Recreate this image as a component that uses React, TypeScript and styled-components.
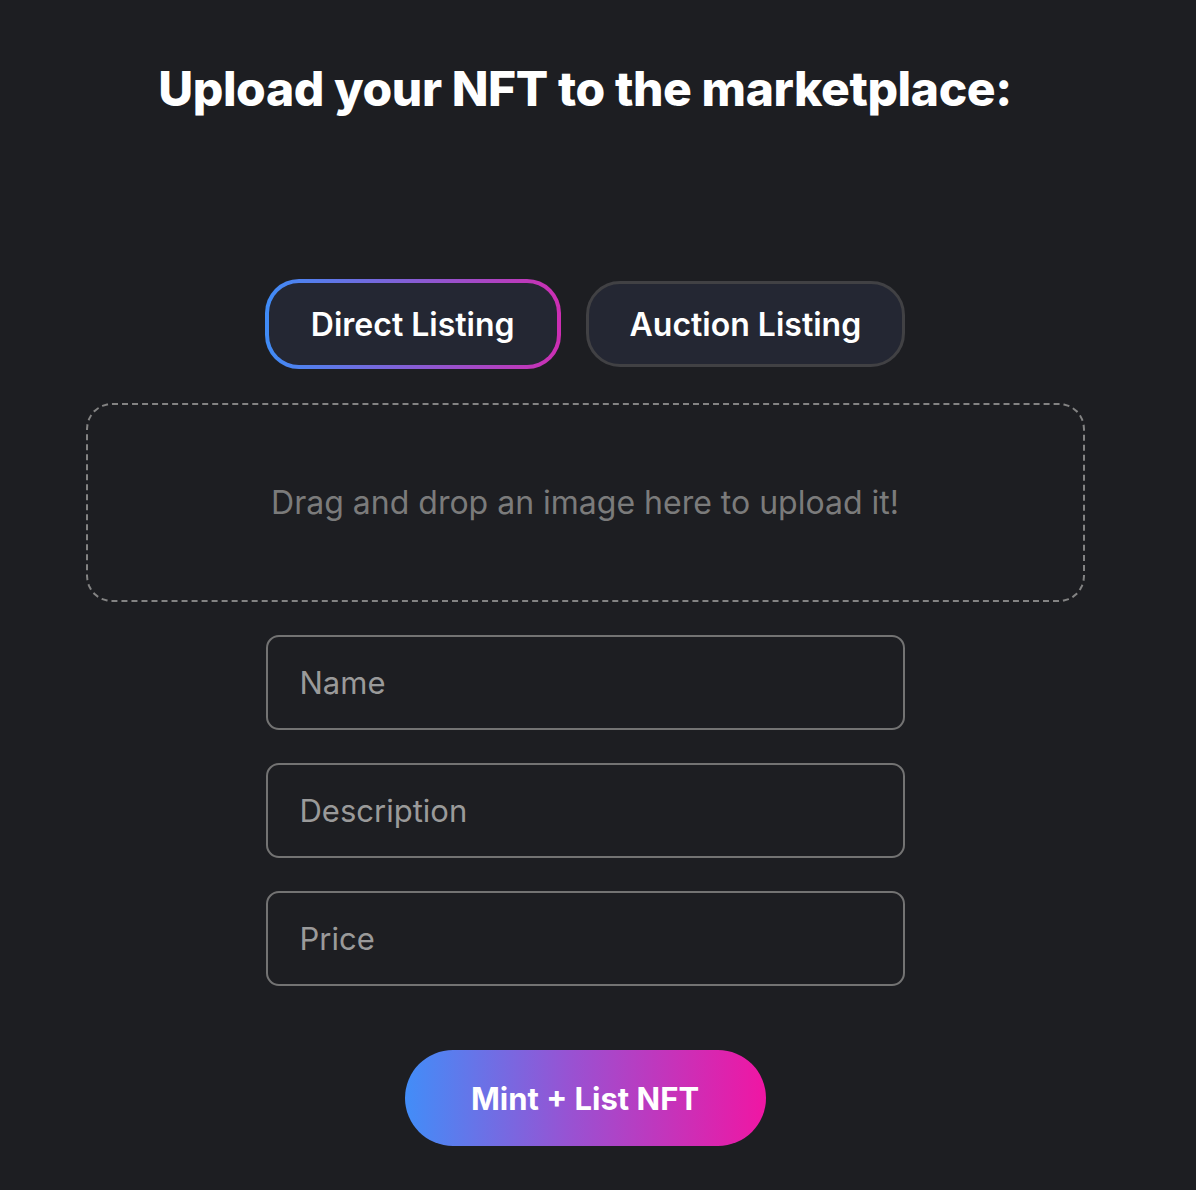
import React from "react";
import styled, { createGlobalStyle } from "styled-components";

const Global = createGlobalStyle`
  html, body {
    margin: 0;
    padding: 0;
    background: #1d1e22;
    font-family: Inter, "Noto Sans", sans-serif;
  }
`;

const Page = styled.main`
  width: 1170px;
  display: flex;
  flex-direction: column;
  align-items: center;
  padding-top: 55px;
  padding-bottom: 44px;
`;

const Title = styled.h1`
  margin: 0;
  font-size: 48px;
  line-height: 68px;
  font-weight: 800;
  color: #ffffff;
  letter-spacing: -0.4px;
`;

const Tabs = styled.div`
  margin-top: 156px;
  display: flex;
  align-items: center;
  gap: 25px;
`;

const Tab = styled.button<{ $active?: boolean }>`
  box-sizing: border-box;
  height: ${(p) => (p.$active ? 90 : 86)}px;
  padding: 0 ${(p) => (p.$active ? 42 : 41)}px;
  border-radius: 34px;
  font-family: Inter, "Noto Sans", sans-serif;
  font-size: 32px;
  font-weight: 600;
  color: #ffffff;
  cursor: pointer;
  border: ${(p) => (p.$active ? "4px solid transparent" : "3px solid #414144")};
  background: ${(p) =>
    p.$active
      ? "linear-gradient(#242733, #242733) padding-box, linear-gradient(90deg, #3f8cf7, #cd2eb3) border-box"
      : "#242733"};
`;

const DropZone = styled.div`
  box-sizing: border-box;
  margin-top: 34px;
  width: 999px;
  height: 199px;
  border: 2px dashed #838383;
  border-radius: 26px;
  display: flex;
  align-items: center;
  justify-content: center;
  color: #7b7b7b;
  font-size: 32px;
  font-weight: 400;
`;

const Fields = styled.div`
  margin-top: 33px;
  display: flex;
  flex-direction: column;
  gap: 33px;
`;

const Input = styled.input`
  box-sizing: border-box;
  width: 639px;
  height: 95px;
  border: 2px solid #737373;
  border-radius: 13px;
  background: transparent;
  padding: 0 32px;
  font-family: Inter, "Noto Sans", sans-serif;
  font-size: 31px;
  color: #fff;
  outline: none;
  &::placeholder {
    color: #9a9a9a;
  }
`;

const Submit = styled.button`
  margin-top: 64px;
  width: 361px;
  height: 96px;
  border: none;
  border-radius: 48px;
  background: linear-gradient(90deg, #428df8 0%, #9753d3 45%, #f016a3 100%);
  color: #ffffff;
  font-family: Inter, "Noto Sans", sans-serif;
  font-size: 31px;
  font-weight: 700;
  cursor: pointer;
`;

export default function App() {
  return (
    <>
      <Global />
      <Page>
        <Title>Upload your NFT to the marketplace:</Title>
        <Tabs>
          <Tab $active>Direct Listing</Tab>
          <Tab>Auction Listing</Tab>
        </Tabs>
        <DropZone>Drag and drop an image here to upload it!</DropZone>
        <Fields>
          <Input placeholder="Name" />
          <Input placeholder="Description" />
          <Input placeholder="Price" />
        </Fields>
        <Submit>Mint + List NFT</Submit>
      </Page>
    </>
  );
}
